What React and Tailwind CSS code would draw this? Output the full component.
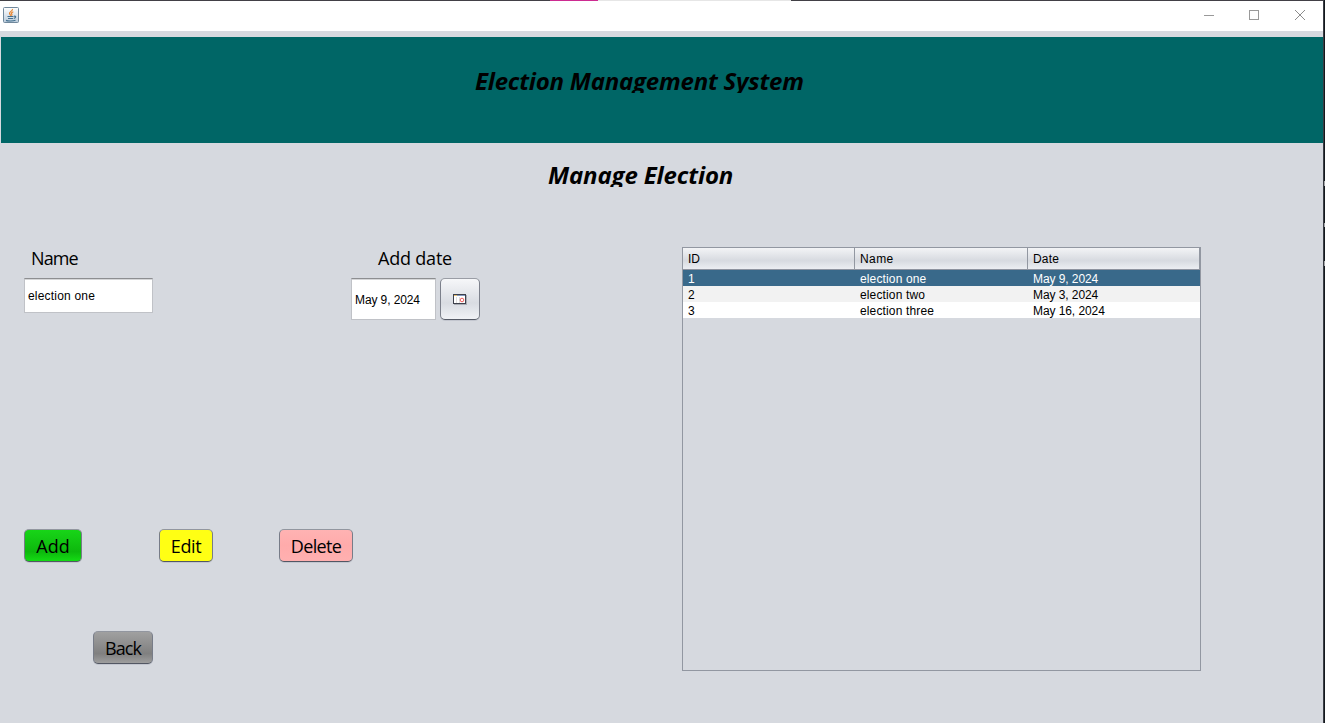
import React from "react";

const rows = [
  { id: "1", name: "election one", date: "May 9, 2024", style: "bg-[#39698a] text-white" },
  { id: "2", name: "election two", date: "May 3, 2024", style: "bg-[#f2f2f2]" },
  { id: "3", name: "election three", date: "May 16, 2024", style: "bg-white" },
];

function JavaIcon() {
  return (
    <svg width="16" height="16" viewBox="0 0 16 16" fill="none">
      <defs>
        <linearGradient id="cup-bg" x1="0" y1="0" x2="0" y2="1">
          <stop offset="0" stopColor="#ffffff" />
          <stop offset="1" stopColor="#b9cbdb" />
        </linearGradient>
      </defs>
      <rect x="0.5" y="0.5" width="15" height="15" rx="1" fill="url(#cup-bg)" stroke="#70889c" />
      <path d="M9.5 2C10 4 6 4.7 6.5 6.5 6.7 7.4 7.8 7.6 7.6 8.8M10.3 4.7C8.5 5.5 8 6.3 8.8 7.2 9.2 7.7 8.8 8.3 8.5 8.7" stroke="#e8822a" strokeWidth="1.2" />
      <path d="M4.5 9.5H10.5M11 9.3C13.4 8.7 13 11 10.8 11.3M5 11.5H10M3 13.4C5 14.2 10 14.2 12.5 13.2" stroke="#44708f" strokeWidth="1.2" />
    </svg>
  );
}

function WindowButtons() {
  return (
    <div className="flex pt-[9px] pr-[18px]">
      <svg width="10" height="10" viewBox="0 0 10 10" shapeRendering="crispEdges">
        <path d="M0 5.5H10" stroke="#999" />
      </svg>
      <svg className="ml-[35px]" width="10" height="10" viewBox="0 0 10 10" shapeRendering="crispEdges">
        <rect x="0.5" y="0.5" width="9" height="9" fill="none" stroke="#999" />
      </svg>
      <svg className="ml-9" width="10" height="10" viewBox="0 0 10 10">
        <path d="M0 0L10 10M10 0L0 10" stroke="#8c8c8c" />
      </svg>
    </div>
  );
}

function CalendarIcon() {
  return (
    <svg width="14" height="11" viewBox="0 0 14 11">
      <rect x="1" y="1" width="13" height="10" fill="#a9adb5" />
      <rect x="0.5" y="0.5" width="12" height="9" fill="#fff" stroke="#3e414c" />
      <path d="M1 1.5H12" stroke="#8298bd" />
      <path d="M1 1.5H4" stroke="#e4bd70" />
      <path d="M3.5 3V9M6.5 3V9" stroke="#dedede" />
      <circle cx="9" cy="6" r="1.8" fill="#fff" stroke="#ee5a5a" />
    </svg>
  );
}

function Button({ className, children }) {
  return (
    <button
      className={
        "h-[33px] shrink-0 rounded-[5px] border border-x-[#777c88] border-t-[#92969f] border-b-[#525763] pt-px text-center font-['Open_Sans',sans-serif] text-[18px] leading-[31px] shadow-[0_1px_0_#c3c6cf] " +
        className
      }
    >
      {children}
    </button>
  );
}

export default function App() {
  return (
    <div className="flex h-[723px] w-[1325px] overflow-hidden bg-[#d6d9df] font-['Liberation_Sans',Arial,sans-serif] text-[12px] text-black">
      <div className="flex w-[1323px] flex-col">
        <div className="flex h-px shrink-0 bg-[#424046]">
          <div className="ml-[550px] w-12 bg-[#cd2b91]" />
          <div className="w-[193px] bg-[#e6e6e6]" />
        </div>
        <header className="flex h-[30px] shrink-0 items-start justify-between bg-white pl-[3px]">
          <div className="pt-1.5">
            <JavaIcon />
          </div>
          <WindowButtons />
        </header>

        <div className="mt-1.5 ml-px h-[106px] shrink-0 bg-[#006666] pt-8 pl-[474px]">
          <h1 className="h-6 overflow-hidden font-['Open_Sans',sans-serif] text-[24px] leading-6 font-bold tracking-[-0.22px] whitespace-nowrap italic">
            Election Management System
          </h1>
        </div>
        <div className="shrink-0 pt-5 pl-[548px]">
          <h2 className="h-6 overflow-hidden font-['Open_Sans',sans-serif] text-[24px] leading-6 font-bold tracking-[-0.14px] whitespace-nowrap italic">
            Manage Election
          </h2>
        </div>

        <main className="flex pt-[60px] pl-6">
          <section className="flex w-[658px] shrink-0 flex-col">
            <div className="flex h-[282px]">
              <div className="w-[327px]">
                <label className="block h-[31px] pl-[7px] font-['Open_Sans',sans-serif] text-[18px] leading-[23px] tracking-[-0.9px]">
                  Name
                </label>
                <div className="h-[35px] w-[129px] border border-[#c0c2c7] border-t-[#8d8e91] bg-white pl-[3px] leading-[34px] tracking-[0.2px] shadow-[inset_0_1px_0_#d5d6d8]">
                  election one
                </div>
              </div>
              <div>
                <label className="block h-[31px] pl-[27px] font-['Open_Sans',sans-serif] text-[18px] leading-[23px] tracking-[-0.2px]">
                  Add date
                </label>
                <div className="flex gap-1">
                  <div className="h-[42px] w-[85px] border border-[#c0c2c7] border-t-[#8d8e91] bg-white pl-[3px] leading-[42px] tracking-[-0.1px] shadow-[inset_0_1px_0_#d5d6d8]">
                    May 9, 2024
                  </div>
                  <button className="flex h-[42px] w-10 items-center justify-center rounded-[5px] border border-x-[#7c808b] border-t-[#9a9da5] border-b-[#555a66] bg-linear-to-b from-[#f6f7f9] via-[#d9dce2] via-60% to-[#f0f2f6] shadow-[0_1px_0_#c3c6cf]">
                    <CalendarIcon />
                  </button>
                </div>
              </div>
            </div>
            <div className="flex">
              <Button className="w-[58px] bg-linear-to-b from-[#18d518] via-[#0db80d] via-70% to-[#14dc14]">Add</Button>
              <Button className="ml-[77px] w-[54px] bg-[#ffff14] tracking-[-0.4px]">Edit</Button>
              <Button className="ml-[66px] w-[74px] bg-linear-to-b from-[#ffb3b3] via-[#ffabab] to-[#ffb0b0] tracking-[-0.65px]">Delete</Button>
            </div>
            <div className="mt-[69px] flex pl-[69px]">
              <Button className="w-[60px] bg-linear-to-b from-[#a0a0a0] via-[#808080] via-70% to-[#9e9e9e] tracking-[-0.9px]">Back</Button>
            </div>
          </section>

          <section className="h-[424px] w-[519px] border border-[#9297a1]">
            <div className="grid h-[22px] grid-cols-[172px_173px_172px] border-b border-[#8e939f] bg-linear-to-b from-[#f3f4f6] via-[#d7dae0] via-60% to-[#eceef2] leading-[22px]">
              <div className="border-r border-[#9297a1] pl-[5px]">ID</div>
              <div className="border-r border-[#9297a1] pl-[5px] tracking-[0.4px]">Name</div>
              <div className="border-r border-[#9297a1] pl-[5px] tracking-[0.2px]">Date</div>
            </div>
            {rows.map((row) => (
              <div
                key={row.id}
                className={"grid h-4 grid-cols-[172px_173px_172px] leading-[18px] " + row.style}
              >
                <div className="pl-[5px]">{row.id}</div>
                <div className="pl-[5px] tracking-[0.14px]">{row.name}</div>
                <div className="pl-[5px] tracking-[-0.08px]">{row.date}</div>
              </div>
            ))}
          </section>
        </main>
      </div>
      <div className="flex w-0.5 flex-col border-l border-[#3a3d45] bg-[#14191d] pt-[181px]">
        <div className="h-[5px] bg-[#a5a7a9]" />
        <div className="mt-[37px] h-[4px] bg-[#a5a7a9]" />
        <div className="mt-[34px] h-[5px] bg-[#a5a7a9]" />
      </div>
    </div>
  );
}
